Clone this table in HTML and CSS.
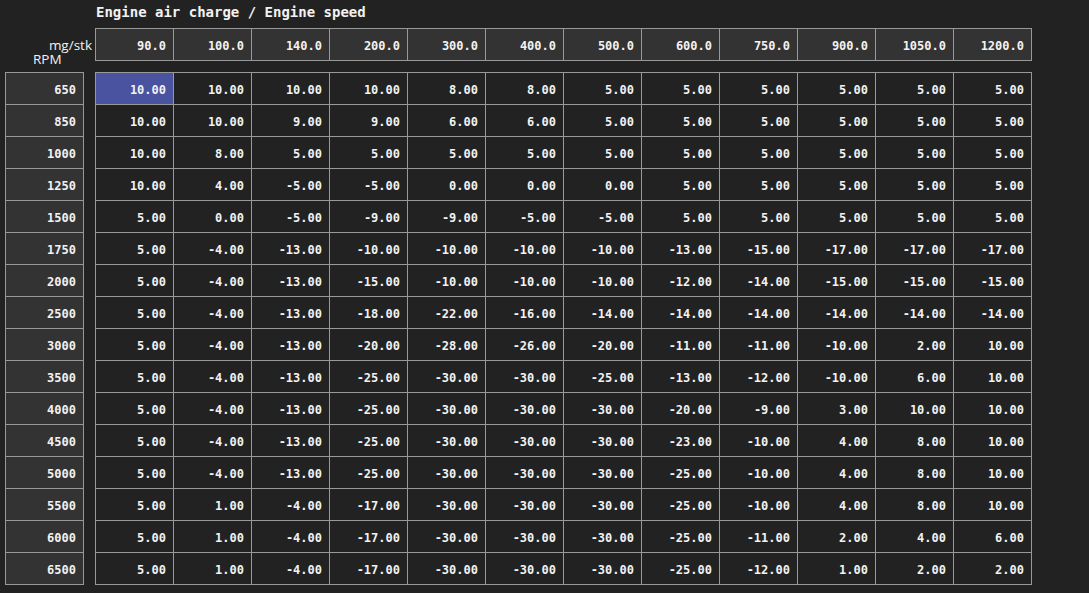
FILE: index.html
```html
<!DOCTYPE html>
<html>
<head>
<meta charset="utf-8">
<link rel="stylesheet" href="styles.css">
</head>
<body>
<div class="title">Engine air charge / Engine speed</div>
<div class="layout">
  <div class="corner"><div class="lbl-x">mg/stk</div><div class="lbl-y">RPM</div></div>
  <div class="tbl head">
    <div class="c">90.0</div><div class="c">100.0</div><div class="c">140.0</div><div class="c">200.0</div><div class="c">300.0</div><div class="c">400.0</div><div class="c">500.0</div><div class="c">600.0</div><div class="c">750.0</div><div class="c">900.0</div><div class="c">1050.0</div><div class="c">1200.0</div>
  </div>
  <div class="tbl rows">
    <div class="c">650</div><div class="c">850</div><div class="c">1000</div><div class="c">1250</div><div class="c">1500</div><div class="c">1750</div><div class="c">2000</div><div class="c">2500</div><div class="c">3000</div><div class="c">3500</div><div class="c">4000</div><div class="c">4500</div><div class="c">5000</div><div class="c">5500</div><div class="c">6000</div><div class="c">6500</div>
  </div>
  <div class="tbl data">
    <div class="c sel">10.00</div><div class="c">10.00</div><div class="c">10.00</div><div class="c">10.00</div><div class="c">8.00</div><div class="c">8.00</div><div class="c">5.00</div><div class="c">5.00</div><div class="c">5.00</div><div class="c">5.00</div><div class="c">5.00</div><div class="c">5.00</div>
    <div class="c">10.00</div><div class="c">10.00</div><div class="c">9.00</div><div class="c">9.00</div><div class="c">6.00</div><div class="c">6.00</div><div class="c">5.00</div><div class="c">5.00</div><div class="c">5.00</div><div class="c">5.00</div><div class="c">5.00</div><div class="c">5.00</div>
    <div class="c">10.00</div><div class="c">8.00</div><div class="c">5.00</div><div class="c">5.00</div><div class="c">5.00</div><div class="c">5.00</div><div class="c">5.00</div><div class="c">5.00</div><div class="c">5.00</div><div class="c">5.00</div><div class="c">5.00</div><div class="c">5.00</div>
    <div class="c">10.00</div><div class="c">4.00</div><div class="c">-5.00</div><div class="c">-5.00</div><div class="c">0.00</div><div class="c">0.00</div><div class="c">0.00</div><div class="c">5.00</div><div class="c">5.00</div><div class="c">5.00</div><div class="c">5.00</div><div class="c">5.00</div>
    <div class="c">5.00</div><div class="c">0.00</div><div class="c">-5.00</div><div class="c">-9.00</div><div class="c">-9.00</div><div class="c">-5.00</div><div class="c">-5.00</div><div class="c">5.00</div><div class="c">5.00</div><div class="c">5.00</div><div class="c">5.00</div><div class="c">5.00</div>
    <div class="c">5.00</div><div class="c">-4.00</div><div class="c">-13.00</div><div class="c">-10.00</div><div class="c">-10.00</div><div class="c">-10.00</div><div class="c">-10.00</div><div class="c">-13.00</div><div class="c">-15.00</div><div class="c">-17.00</div><div class="c">-17.00</div><div class="c">-17.00</div>
    <div class="c">5.00</div><div class="c">-4.00</div><div class="c">-13.00</div><div class="c">-15.00</div><div class="c">-10.00</div><div class="c">-10.00</div><div class="c">-10.00</div><div class="c">-12.00</div><div class="c">-14.00</div><div class="c">-15.00</div><div class="c">-15.00</div><div class="c">-15.00</div>
    <div class="c">5.00</div><div class="c">-4.00</div><div class="c">-13.00</div><div class="c">-18.00</div><div class="c">-22.00</div><div class="c">-16.00</div><div class="c">-14.00</div><div class="c">-14.00</div><div class="c">-14.00</div><div class="c">-14.00</div><div class="c">-14.00</div><div class="c">-14.00</div>
    <div class="c">5.00</div><div class="c">-4.00</div><div class="c">-13.00</div><div class="c">-20.00</div><div class="c">-28.00</div><div class="c">-26.00</div><div class="c">-20.00</div><div class="c">-11.00</div><div class="c">-11.00</div><div class="c">-10.00</div><div class="c">2.00</div><div class="c">10.00</div>
    <div class="c">5.00</div><div class="c">-4.00</div><div class="c">-13.00</div><div class="c">-25.00</div><div class="c">-30.00</div><div class="c">-30.00</div><div class="c">-25.00</div><div class="c">-13.00</div><div class="c">-12.00</div><div class="c">-10.00</div><div class="c">6.00</div><div class="c">10.00</div>
    <div class="c">5.00</div><div class="c">-4.00</div><div class="c">-13.00</div><div class="c">-25.00</div><div class="c">-30.00</div><div class="c">-30.00</div><div class="c">-30.00</div><div class="c">-20.00</div><div class="c">-9.00</div><div class="c">3.00</div><div class="c">10.00</div><div class="c">10.00</div>
    <div class="c">5.00</div><div class="c">-4.00</div><div class="c">-13.00</div><div class="c">-25.00</div><div class="c">-30.00</div><div class="c">-30.00</div><div class="c">-30.00</div><div class="c">-23.00</div><div class="c">-10.00</div><div class="c">4.00</div><div class="c">8.00</div><div class="c">10.00</div>
    <div class="c">5.00</div><div class="c">-4.00</div><div class="c">-13.00</div><div class="c">-25.00</div><div class="c">-30.00</div><div class="c">-30.00</div><div class="c">-30.00</div><div class="c">-25.00</div><div class="c">-10.00</div><div class="c">4.00</div><div class="c">8.00</div><div class="c">10.00</div>
    <div class="c">5.00</div><div class="c">1.00</div><div class="c">-4.00</div><div class="c">-17.00</div><div class="c">-30.00</div><div class="c">-30.00</div><div class="c">-30.00</div><div class="c">-25.00</div><div class="c">-10.00</div><div class="c">4.00</div><div class="c">8.00</div><div class="c">10.00</div>
    <div class="c">5.00</div><div class="c">1.00</div><div class="c">-4.00</div><div class="c">-17.00</div><div class="c">-30.00</div><div class="c">-30.00</div><div class="c">-30.00</div><div class="c">-25.00</div><div class="c">-11.00</div><div class="c">2.00</div><div class="c">4.00</div><div class="c">6.00</div>
    <div class="c">5.00</div><div class="c">1.00</div><div class="c">-4.00</div><div class="c">-17.00</div><div class="c">-30.00</div><div class="c">-30.00</div><div class="c">-30.00</div><div class="c">-25.00</div><div class="c">-12.00</div><div class="c">1.00</div><div class="c">2.00</div><div class="c">2.00</div>
  </div>
</div>
</body>
</html>
```
FILE: styles.css
```css
html, body {
  margin: 0;
  background: #222222;
  color: #f2f2f2;
}
body {
  padding: 0 0 0 5px;
  font-family: "DejaVu Sans Mono", "Liberation Mono", monospace;
  font-weight: bold;
  font-size: 12px;
}
.title {
  font-size: 14px;
  line-height: 24px;
  height: 24px;
  margin: 0 0 4px 91px;
}
.layout {
  display: grid;
  grid-template-columns: 79px 937px;
  grid-template-rows: 33px auto;
  column-gap: 11px;
  row-gap: 11px;
  align-items: start;
}
.corner {
  height: 33px;
  margin-right: -8px;
  font-family: "Open Sans", "Noto Sans", sans-serif;
  font-weight: normal;
  font-size: 13.5px;
  line-height: 14px;
}
.lbl-x {
  text-align: right;
  padding-top: 10px;
}
.lbl-y {
  padding-left: 28px;
}
.tbl {
  display: grid;
  border-top: 1px solid #999999;
  border-left: 1px solid #999999;
}
.head, .data {
  grid-template-columns: repeat(12, 78px);
}
.rows {
  grid-template-columns: 78px;
}
.c {
  box-sizing: border-box;
  height: 32px;
  padding-top: 3px;
  line-height: 28px;
  border-right: 1px solid #999999;
  border-bottom: 1px solid #999999;
  text-align: right;
  padding-right: 7px;
  white-space: nowrap;
}
.head .c, .rows .c {
  background: #333333;
}
.data .c {
  background: #222222;
}
.data .c.sel {
  background: #4a53a0;
}
```
